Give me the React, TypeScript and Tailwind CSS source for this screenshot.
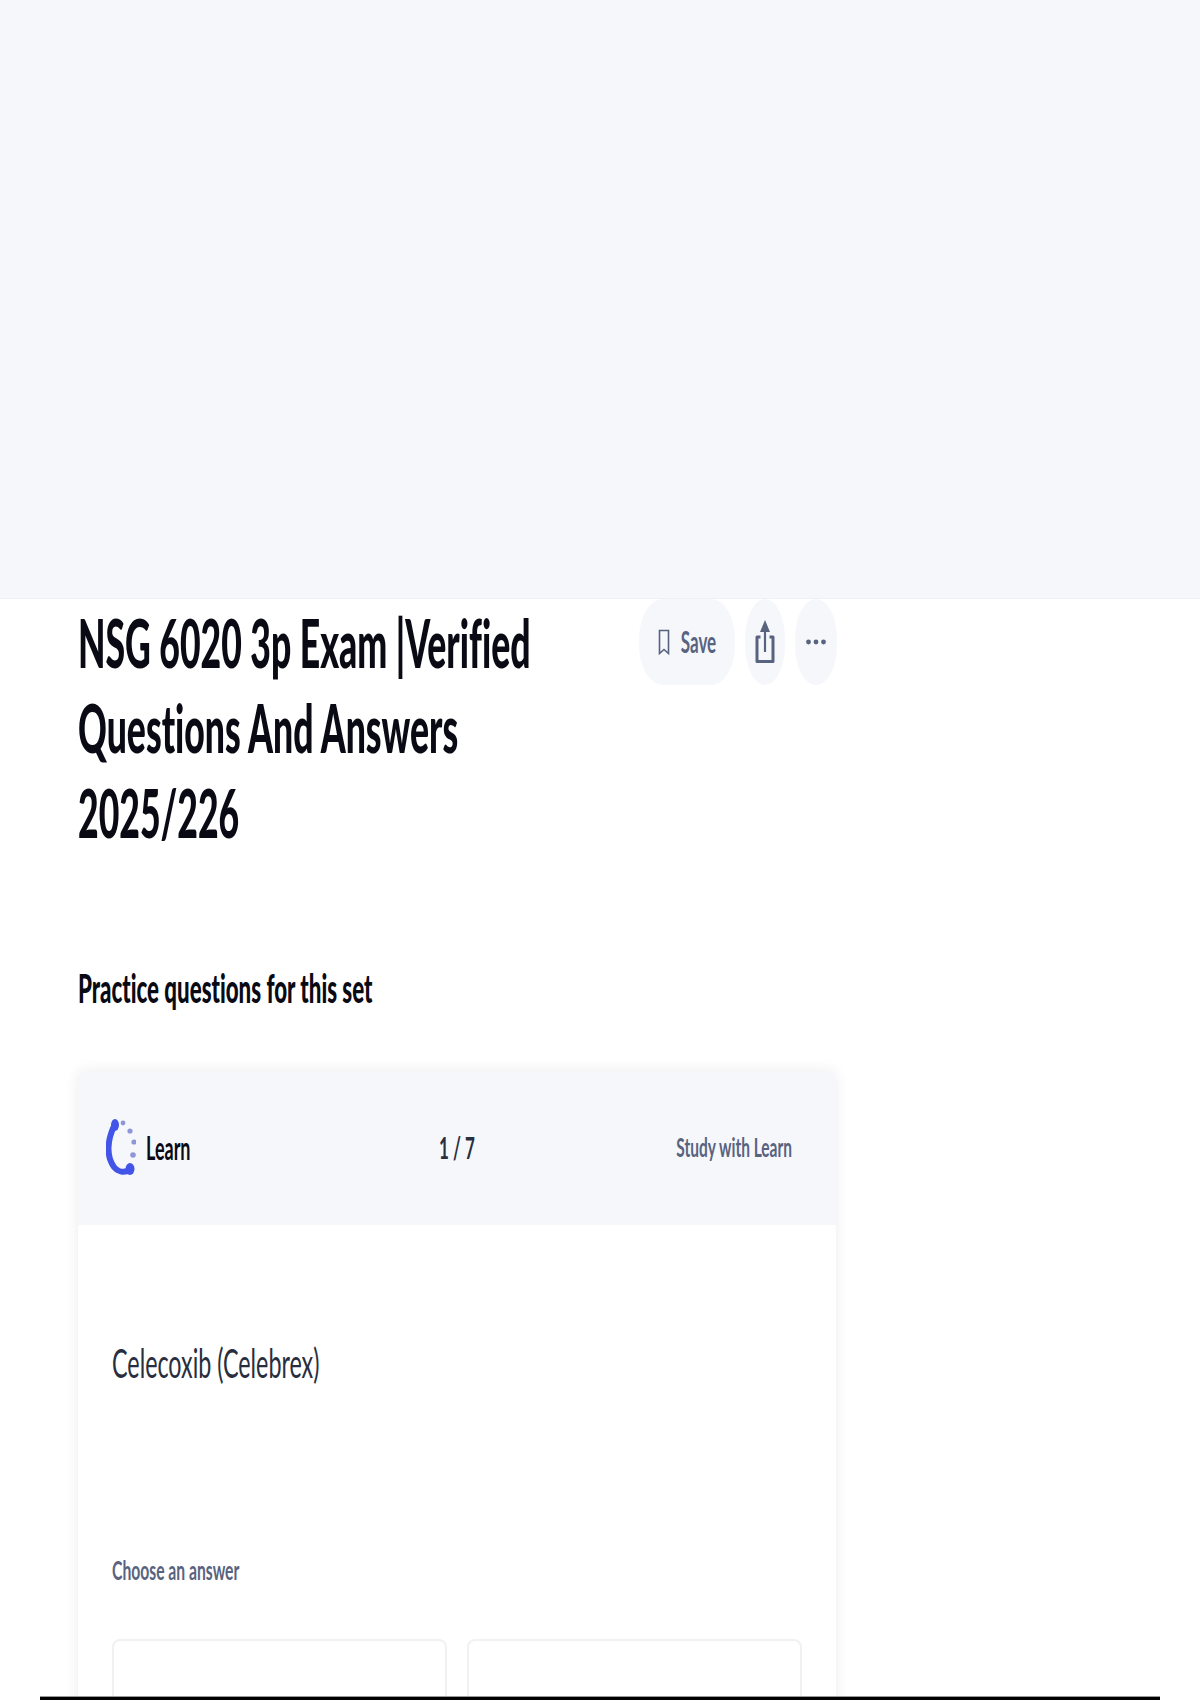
const font = "font-['Lato',sans-serif]";

const BookmarkIcon = () => (
  <svg viewBox="0 0 12 28" className="w-[12px] h-[28px]" fill="none" stroke="#586380" strokeWidth="1.6">
    <path d="M1.5 2.5 H10.5 V25.5 L6 21.5 L1.5 25.5 Z" />
  </svg>
);

const ShareIcon = () => (
  <svg viewBox="0 0 20 44" className="w-[20px] h-[44px]" fill="none" stroke="#586380">
    <path d="M5.5 17 H2 V41.5 H18 V17 H14.5" strokeWidth="3" strokeLinejoin="round" />
    <path d="M10 6 V32" strokeWidth="2.2" />
    <path d="M5 12 L10 0 L15 12 Z" fill="#586380" stroke="none" />
  </svg>
);

const DotsIcon = () => (
  <svg viewBox="0 0 20 6" className="w-[20px] h-[6px]" fill="#586380">
    <circle cx="2.5" cy="3" r="2.4" />
    <circle cx="10" cy="3" r="2.4" />
    <circle cx="17.5" cy="3" r="2.4" />
  </svg>
);

const LearnIcon = () => (
  <svg viewBox="0 0 30 60" className="w-[30px] h-[60px]" fill="none">
    <path d="M9 6 C1 22 0 38 8 49 C12 54 18 55 24 52" stroke="#4255e8" strokeWidth="6" strokeLinecap="round" />
    <ellipse cx="9" cy="7" rx="4" ry="6" fill="#4255e8" />
    <ellipse cx="24" cy="51" rx="4.5" ry="6" fill="#4255e8" />
    <circle cx="17" cy="5" r="2.4" fill="#8f96d8" />
    <circle cx="24" cy="13" r="2.6" fill="#8f96d8" />
    <circle cx="28" cy="24" r="2.6" fill="#8f96d8" />
    <circle cx="27" cy="37" r="2.8" fill="#8f96d8" />
  </svg>
);

export default function App() {
  return (
    <div className={`relative h-[1700px] overflow-hidden bg-white [font-variant-ligatures:none] ${font}`}>
      <div className="h-[599px] bg-[#f6f7fb] border-b border-[#eff0f3]"></div>

      <main className="w-[758px] ml-[78px]">
        <div className="flex justify-between">
          <h1 className="w-[500px] pt-[2px] text-[35.6px] leading-[85px] font-black text-[#0a0a14]">
            <span className="block origin-left scale-y-[1.85] whitespace-nowrap">NSG 6020 3p Exam |Verified</span>
            <span className="block origin-left scale-y-[1.85] whitespace-nowrap">Questions And Answers</span>
            <span className="block origin-left scale-y-[1.85] whitespace-nowrap">2025/226</span>
          </h1>
          <div className="flex gap-[10px] h-[86px] -mr-[1px]">
            <button className="w-[96px] flex items-center justify-center gap-[11px] rounded-[24px/40px] bg-[#f6f7fb] text-[#586380]">
              <BookmarkIcon />
              <span className="text-[17px] font-bold scale-y-[1.75]">Save</span>
            </button>
            <button className="w-[40px] flex items-center justify-center rounded-[20px/40px] bg-[#f6f7fb]">
              <ShareIcon />
            </button>
            <button className="w-[42px] flex items-center justify-center rounded-[21px/40px] bg-[#f6f7fb]">
              <DotsIcon />
            </button>
          </div>
        </div>

        <h2 className="mt-[114px] text-[22.3px] leading-[38px] font-black text-[#0a0a14]">
          <span className="block origin-left scale-y-[1.75]">Practice questions for this set</span>
        </h2>

        <section className="mt-[63px] h-[800px] rounded-t-lg bg-white shadow-[0_0_14px_rgba(40,46,62,0.09)]">
          <div className="flex h-[154px] items-center justify-between rounded-t-lg bg-[#f6f7fb] pl-[28px] pr-[44px]">
            <div className="flex w-[216px] items-center gap-[10px]">
              <LearnIcon />
              <span className="text-[18px] font-bold text-[#0a0a14] scale-y-[1.75]">Learn</span>
            </div>
            <span className="text-[17px] font-bold text-[#282e3e] scale-y-[1.75]">1 / 7</span>
            <span className="flex w-[200px] justify-end text-[15.5px] font-bold text-[#586380] scale-y-[1.75]">Study with Learn</span>
          </div>

          <div className="px-[34px]">
            <p className="mt-[117px] text-[23.3px] leading-[40px] text-[#282e3e]">
              <span className="block origin-left scale-y-[1.75]">Celecoxib (Celebrex)</span>
            </p>
            <p className="mt-[175px] text-[15.7px] leading-[24px] font-bold text-[#586380]">
              <span className="block origin-left scale-y-[1.75]">Choose an answer</span>
            </p>
            <div className="mt-[58px] grid grid-cols-2 gap-[20px]">
              <div className="h-[140px] rounded-[8px] border-2 border-[#f0f1f3]"></div>
              <div className="h-[140px] rounded-[8px] border-2 border-[#f0f1f3]"></div>
            </div>
          </div>
        </section>
      </main>

      <div className="absolute bottom-0 left-[40px] right-[40px] h-[4px] border-t border-[#999] bg-black"></div>
    </div>
  );
}
